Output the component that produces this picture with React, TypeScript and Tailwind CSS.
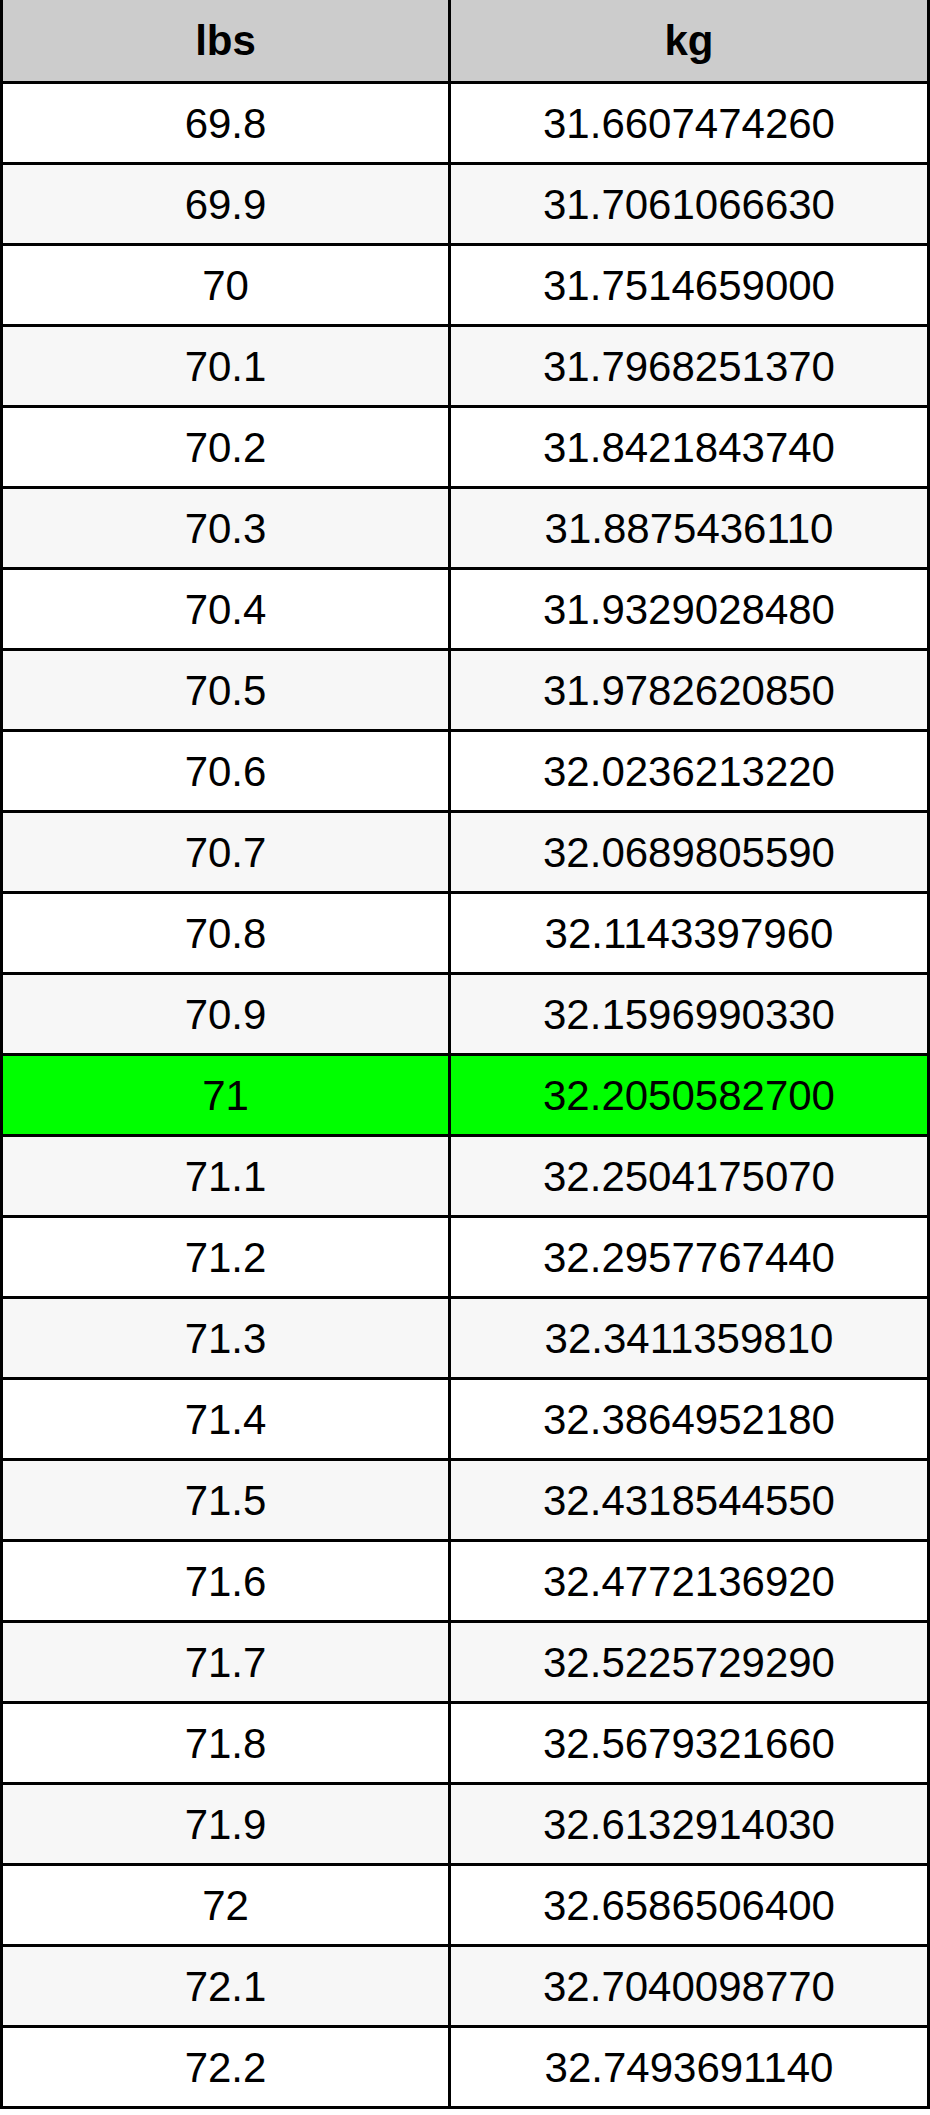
const rows: [string, string][] = [
  ["69.8", "31.6607474260"],
  ["69.9", "31.7061066630"],
  ["70", "31.7514659000"],
  ["70.1", "31.7968251370"],
  ["70.2", "31.8421843740"],
  ["70.3", "31.8875436110"],
  ["70.4", "31.9329028480"],
  ["70.5", "31.9782620850"],
  ["70.6", "32.0236213220"],
  ["70.7", "32.0689805590"],
  ["70.8", "32.1143397960"],
  ["70.9", "32.1596990330"],
  ["71", "32.2050582700"],
  ["71.1", "32.2504175070"],
  ["71.2", "32.2957767440"],
  ["71.3", "32.3411359810"],
  ["71.4", "32.3864952180"],
  ["71.5", "32.4318544550"],
  ["71.6", "32.4772136920"],
  ["71.7", "32.5225729290"],
  ["71.8", "32.5679321660"],
  ["71.9", "32.6132914030"],
  ["72", "32.6586506400"],
  ["72.1", "32.7040098770"],
  ["72.2", "32.7493691140"],
];

export default function App() {
  return (
    <div className="w-[930px] bg-white font-['Liberation_Sans',Arial,sans-serif] text-[42px] text-black">
      <div className="border-x-[3px] border-b-[3px] border-black">
        <div className="flex h-[81px] bg-[#cccccc] font-bold">
          <div className="flex w-[448px] items-center justify-center border-r-[3px] border-black">
            lbs
          </div>
          <div className="flex flex-1 items-center justify-center">kg</div>
        </div>
        {rows.map(([lbs, kg], i) => {
          const bg = lbs === "71" ? "bg-[#00ff00]" : i % 2 === 1 ? "bg-[#f7f7f7]" : "bg-white";
          return (
            <div key={lbs} className={`flex h-[81px] border-t-[3px] border-black ${bg}`}>
              <div className="flex w-[448px] items-center justify-center border-r-[3px] border-black">
                {lbs}
              </div>
              <div className="flex flex-1 items-center justify-center">{kg}</div>
            </div>
          );
        })}
      </div>
    </div>
  );
}
